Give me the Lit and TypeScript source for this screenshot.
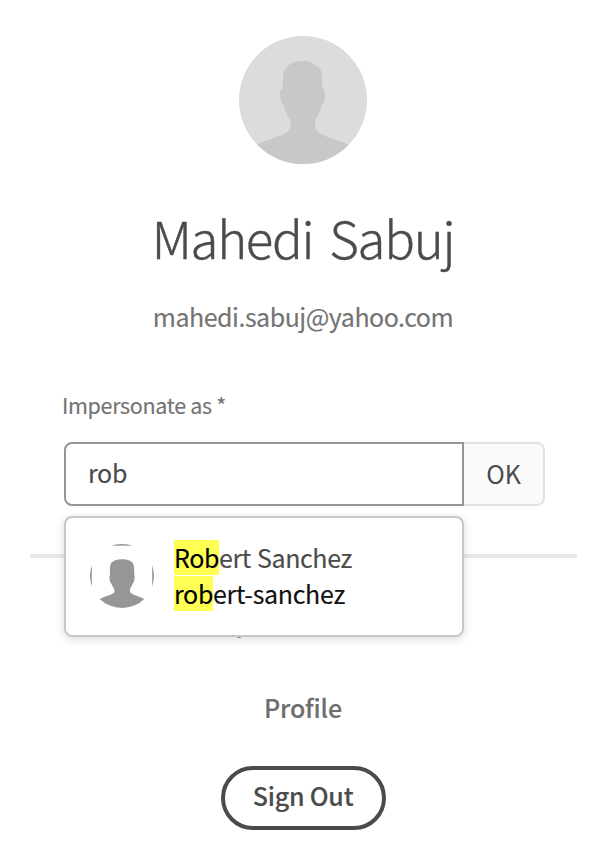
import { LitElement, html, css } from "lit";
import { customElement, property } from "lit/decorators.js";

@customElement("user-silhouette")
class UserSilhouette extends LitElement {
  @property() variant = "large";
  static styles = css`
    :host { display: block; flex: none; }
    svg { display: block; width: 100%; height: 100%; }
  `;
  render() {
    return this.variant === "large"
      ? html`<svg viewBox="0 0 128 128">
          <defs><clipPath id="c"><circle cx="64" cy="64" r="64" /></clipPath></defs>
          <g clip-path="url(#c)">
            <rect width="128" height="128" fill="#dcdcdc" />
            <path fill="#c8c8c8" d="M64 24.700C69 24.700 73 26 76.500 29.500C77.500 31 80 30.500 81.500 33.500C83 37 83.500 42 83.200 52C86.500 54 86.500 60 85 65.500C84.500 68.500 83.500 69 82.500 69C81.500 75 79 79 76.500 84C75 91 77 96 83 98.500C93 103.500 103 105 111 109.500V128H16V109.500C24 105 34 103 44 98.500C51 95.500 53 91 51 84C48 79 46 75 45 69C42.500 69 41.500 64 41 59C41 55 41 53.500 43.800 52.500C43.500 47 44 42 44.300 39C45.500 30 53 24.700 64 24.700Z" />
          </g>
        </svg>`
      : html`<svg viewBox="0 0 64 64">
          <defs><clipPath id="s"><circle cx="32" cy="32" r="32" /></clipPath></defs>
          <g clip-path="url(#s)" fill="#969696">
            <rect width="64" height="1.700" />
            <rect y="16" width="1.800" height="32" />
            <rect x="62.200" y="16" width="1.800" height="32" />
            <path d="M32 15.300C39 15.300 42 17.500 43.600 20.500C44.500 24 44 27 44.300 30.500C45.200 33 44.500 38 42.500 40C41.500 43 39.500 44 40 47.500C41 51.500 48 51 54 55V64H10V55C16 51 23.500 51.500 24.500 47.500C24.500 44 22.500 43 21.500 40C19.500 38 19 33 20 30.500C20 27 19.500 24 20.500 20.500C22 17.500 25.500 15.300 32 15.300Z" />
          </g>
        </svg>`;
  }
}

@customElement("app-root")
class AppRoot extends LitElement {
  static styles = css`
    :host {
      display: block;
      font-family: "Noto Sans CJK SC", "Noto Sans", sans-serif;
      color: #4b4b4b;
      background: #fff;
    }
    * { box-sizing: border-box; }
    .panel {
      display: flex;
      flex-direction: column;
      align-items: center;
      width: 606px;
      height: 866px;
      padding-top: 36px;
      white-space: nowrap;
      -webkit-text-stroke: 0.15px currentColor;
    }
    .avatar { width: 128px; height: 128px; }
    .name { margin: 41px 0 0; font-weight: 300; font-size: 51px; line-height: 64px; letter-spacing: -1.3px; word-spacing: 6px; -webkit-text-stroke-width: 0.4px; }
    .email { margin-top: 31px; font-size: 25px; line-height: 32px; letter-spacing: -0.5px; color: #747474; }
    .form { width: 482px; margin: 59px 0 0 2px; position: relative; }
    .label { display: block; margin-left: -1px; font-size: 21.5px; line-height: 28px; letter-spacing: -0.33px; color: #747474; }
    .field { display: flex; height: 64px; margin-top: 23px; margin-left: 1px; }
    .input {
      width: 400px;
      border: 2px solid #959595;
      border-radius: 8px 0 0 8px;
      padding: 0 22px;
      font-size: 25px;
      line-height: 57px;
      letter-spacing: -0.35px;
    }
    .ok {
      width: 81px;
      border: 2px solid #e1e1e1;
      border-left: 0;
      border-radius: 0 8px 8px 0;
      background: #fafafa;
      text-align: center;
      font-size: 25px;
      line-height: 59px;
      -webkit-text-stroke-width: 0;
    }
    .menu {
      position: absolute;
      z-index: 1;
      left: 1px;
      top: 125px;
      width: 400px;
      height: 121px;
      border: 2px solid #c8c8c8;
      border-radius: 8px;
      background: #fff;
      box-shadow: 0 2px 8px rgba(0, 0, 0, 0.15);
      display: flex;
      align-items: center;
      padding-left: 24px;
    }
    .thumb { width: 64px; height: 64px; margin-top: -1px; }
    .lines { display: flex; flex-direction: column; margin: -2px 0 0 20px; font-size: 25px; line-height: 35px; gap: 1px; letter-spacing: -0.4px; word-spacing: 1px; }
    .id { color: #111; letter-spacing: -0.33px; }
    .hit { display: inline-block; background: #ffff54; color: #000; }
    .rule { width: 547px; height: 4px; background: #e8e8e8; margin-top: 48px; flex: none; }
    .tail { width: 4px; height: 2px; margin: 78px 128px 0 0; border-radius: 1px; background: #999; }
    .profile { margin-top: 52px; font-size: 25px; line-height: 34px; font-weight: 500; letter-spacing: -0.15px; color: #6e6e6e; }
    .signout {
      margin-top: 42px;
      width: 165px;
      height: 64px;
      border: 4px solid #4b4b4b;
      border-radius: 32px;
      text-align: center;
      font-size: 25px;
      line-height: 51px;
      font-weight: 500;
      letter-spacing: -0.2px;
    }
  `;
  render() {
    return html`<div class="panel">
      <user-silhouette class="avatar"></user-silhouette>
      <h1 class="name">Mahedi Sabuj</h1>
      <div class="email">mahedi.sabuj@yahoo.com</div>
      <div class="form">
        <span class="label">Impersonate as *</span>
        <div class="field">
          <div class="input">rob</div>
          <div class="ok">OK</div>
        </div>
        <div class="menu">
          <user-silhouette class="thumb" variant="small"></user-silhouette>
          <div class="lines">
            <div><span class="hit">Rob</span>ert Sanchez</div>
            <div class="id"><span class="hit">rob</span>ert-sanchez</div>
          </div>
        </div>
      </div>
      <div class="rule"></div>
      <div class="tail"></div>
      <div class="profile">Profile</div>
      <div class="signout">Sign Out</div>
    </div>`;
  }
}
